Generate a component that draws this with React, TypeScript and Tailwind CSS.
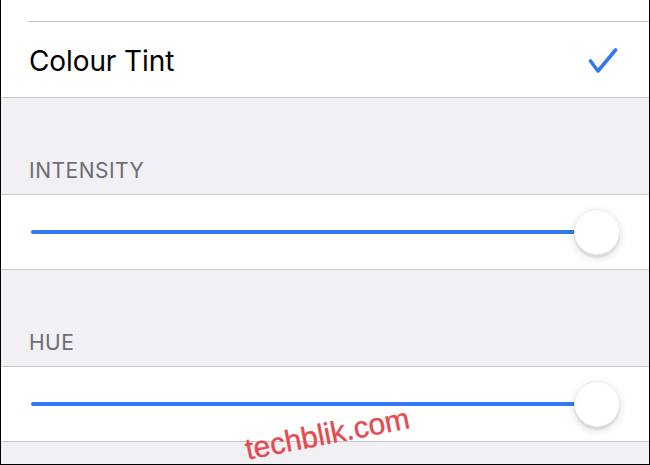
function SliderRow() {
  return (
    <div className="flex h-[76px] items-center border-y border-[#c8c7cc] bg-white pl-[30px] pr-[29px]">
      <div className="h-[4px] flex-1 rounded-full bg-[#3478f6]" />
      <div className="-ml-[2px] h-[46px] w-[46px] rounded-full border border-[#ececec] bg-white shadow-[0_3px_8px_rgba(0,0,0,0.15),0_3px_1px_rgba(0,0,0,0.06)]" />
    </div>
  );
}

function SectionHeader({ label }: { label: string }) {
  return (
    <div className="flex h-[96px] items-end px-[28px] pb-[13px]">
      <span className="text-[21px] leading-none tracking-[0.5px] text-[#6d6d72]">{label}</span>
    </div>
  );
}

export default function App() {
  return (
    <div
      className="relative h-[465px] w-[650px] overflow-hidden border-b border-l border-r border-black bg-[#f0f0f5]"
      style={{ fontFamily: "Inter, 'Noto Sans', sans-serif" }}
    >
      {/* previous row, cut off at the top */}
      <div className="h-[22px] bg-white pl-[27px]">
        <div className="h-full border-b border-[#c8c7cc]" />
      </div>

      <div className="flex h-[76px] items-center justify-between border-b border-[#c8c7cc] bg-white pl-[28px] pr-[31px]">
        <span className="pt-[3px] text-[28px] tracking-[-0.1px] text-black">Colour Tint</span>
        <svg width="30" height="28" viewBox="0 0 30 28" className="mt-[3px]">
          <polyline
            points="2.5,14 10,24 27.5,3"
            fill="none"
            stroke="#3478f6"
            strokeWidth="3.6"
            strokeLinecap="round"
            strokeLinejoin="round"
          />
        </svg>
      </div>

      <SectionHeader label="INTENSITY" />
      <SliderRow />

      <SectionHeader label="HUE" />
      <SliderRow />

      {/* watermark */}
      <div
        className="pointer-events-none absolute left-[243px] top-[423px] -rotate-[11deg] text-[30px] leading-[22px] text-[#e34b50] [-webkit-text-stroke:0.4px_#e34b50]"
        style={{ fontFamily: "'Liberation Sans', Arial, sans-serif" }}
      >
        techblik.com
      </div>
    </div>
  );
}
